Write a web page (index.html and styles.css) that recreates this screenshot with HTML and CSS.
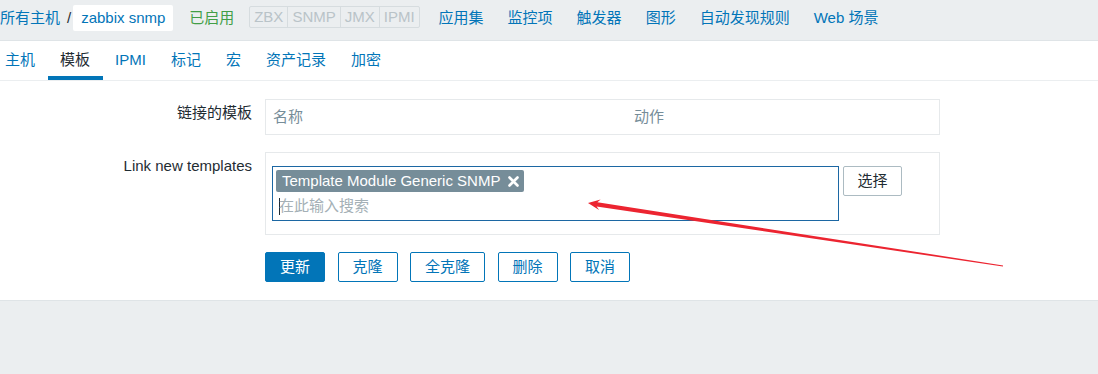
FILE: index.html
```html
<!DOCTYPE html>
<html lang="zh-CN">
<head>
  <meta charset="UTF-8" />
  <title>模板 - zabbix snmp</title>
  <link rel="stylesheet" href="styles.css">
</head>
<body>
  <div class="page">
    <div class="host-nav">
      <a class="crumb" href="#">所有主机</a>
      <span class="crumb-sep">/</span>
      <span class="crumb-current">zabbix snmp</span>
      <span class="status-on">已启用</span>
      <div class="avail">
        <span class="avail-item">ZBX</span>
        <span class="avail-item">SNMP</span>
        <span class="avail-item">JMX</span>
        <span class="avail-item">IPMI</span>
      </div>
      <nav class="host-links">
        <a href="#">应用集</a>
        <a href="#">监控项</a>
        <a href="#">触发器</a>
        <a href="#">图形</a>
        <a href="#">自动发现规则</a>
        <a href="#">Web 场景</a>
      </nav>
    </div>

    <ul class="tabs">
      <li class="tab">主机</li>
      <li class="tab active">模板</li>
      <li class="tab">IPMI</li>
      <li class="tab">标记</li>
      <li class="tab">宏</li>
      <li class="tab">资产记录</li>
      <li class="tab">加密</li>
    </ul>

    <div class="form">
      <div class="form-row">
        <label class="form-label">链接的模板</label>
        <div class="form-field">
          <div class="linked-table">
            <span class="col-name">名称</span>
            <span class="col-action">动作</span>
          </div>
        </div>
      </div>

      <div class="form-row">
        <label class="form-label">Link new templates</label>
        <div class="form-field">
          <div class="field-box">
            <div class="multiselect">
              <span class="ms-tag">Template Module Generic SNMP
                <svg class="ms-remove" width="11" height="11" viewBox="0 0 11 11">
                  <path d="M1.5 1.5 L9.5 9.5 M9.5 1.5 L1.5 9.5" stroke="#fff" stroke-width="2.6" stroke-linecap="round"/>
                </svg>
              </span>
              <div class="ms-search"><span class="caret"></span>在此输入搜索</div>
            </div>
            <button class="btn-alt" type="button">选择</button>
          </div>
        </div>
      </div>

      <div class="form-buttons">
        <button class="btn primary" type="button">更新</button>
        <button class="btn" type="button">克隆</button>
        <button class="btn wide" type="button">全克隆</button>
        <button class="btn" type="button">删除</button>
        <button class="btn" type="button">取消</button>
      </div>
    </div>

    <svg class="annotation" width="1098" height="374" viewBox="0 0 1098 374">
      <polygon fill="#ec2430" points="588,203 600.6,199.6 597.4,202.3 1003.1,265.4 1002.9,266.6 596.6,206.5 599.1,210"/>
    </svg>
  </div>
</body>
</html>
```

FILE: styles.css
```css
:root {
  --blue: #0275b8;
  --text: #1f2c33;
  --grey-bg: #ebeef0;
  --border: #dfe4e7;
  --muted: #768d99;
}

body {
  margin: 0;
  background: var(--grey-bg);
  font-family: "Liberation Sans", "Noto Sans CJK SC", sans-serif;
  font-size: 15px;
  line-height: 18px;
  color: var(--text);
}

a {
  color: var(--blue);
  text-decoration: none;
}

.page {
  position: relative;
  height: 374px;
  overflow: hidden;
}

/* host navigation */
.host-nav {
  display: flex;
  align-items: center;
  height: 36px;
  padding-bottom: 4px;
  white-space: nowrap;
}

.crumb-sep {
  margin: 0 2px 0 7px;
  color: var(--text);
}

.crumb-current {
  display: flex;
  align-items: center;
  height: 26px;
  width: 100px;
  box-sizing: border-box;
  padding: 0 8px;
  background: #fff;
  border-radius: 2px;
  color: var(--blue);
}

.status-on {
  margin-left: 16px;
  color: #429e47;
}

.avail {
  display: flex;
  align-self: flex-start;
  margin: 6px 0 0 15px;
  height: 22px;
  box-sizing: border-box;
  border: 1px solid #d6dcdf;
  border-radius: 2px;
}

.avail-item {
  padding: 0 4px;
  line-height: 20px;
  color: #b9c3c8;
  border-right: 1px solid #d6dcdf;
}

.avail-item:last-child {
  border-right: none;
}

.host-links {
  display: flex;
  gap: 24px;
  margin-left: 19px;
}

/* tabs */
.tabs {
  display: flex;
  margin: 0;
  padding: 0 0 0 5px;
  list-style: none;
  background: #fff;
  border-top: 1px solid var(--border);
  border-bottom: 1px solid var(--grey-bg);
  height: 39px;
}

.tab {
  padding: 0 12.5px;
  line-height: 37px;
  color: var(--blue);
  border-bottom: 4px solid transparent;
  height: 35px;
}

.tab:first-child {
  margin-left: -12.5px;
}

.tab.active {
  color: var(--text);
  border-bottom-color: var(--blue);
}

/* form */
.form {
  background: #fff;
  padding: 18px 0 18px;
  border-bottom: 1px solid var(--border);
}

.form-row {
  display: grid;
  grid-template-columns: 252px 675px;
  column-gap: 13px;
  margin-bottom: 17px;
}

.form-label {
  text-align: right;
  padding-top: 5px;
}

.linked-table {
  display: flex;
  align-items: center;
  height: 34px;
  border: 1px solid #e6e9eb;
  color: var(--muted);
}

.col-name {
  width: 361px;
  padding-left: 7px;
}

.field-box {
  display: flex;
  align-items: flex-start;
  border: 1px solid #e6e9eb;
  padding: 13px 6px;
}

.multiselect {
  width: 567px;
  height: 55px;
  box-sizing: border-box;
  border: 1px solid #1c67a3;
  padding: 3px;
}

.ms-tag {
  display: inline-flex;
  align-items: center;
  height: 22px;
  padding: 0 5px 0 6px;
  background: var(--muted);
  border-radius: 2px;
  color: #fff;
  white-space: nowrap;
}

.ms-remove {
  margin-left: 8px;
}

.ms-search {
  display: flex;
  align-items: center;
  height: 24px;
  margin-top: 2px;
  padding-left: 3px;
  color: #a4b0b6;
}

.caret {
  width: 1px;
  height: 17px;
  background: var(--text);
  margin-right: -1px;
}

.btn-alt {
  margin-left: 4px;
  width: 59px;
  height: 30px;
  background: #fff;
  border: 1px solid #acbbc2;
  border-radius: 2px;
  font: inherit;
  color: var(--text);
  padding: 0;
}

.form-buttons {
  display: flex;
  gap: 12.5px;
  margin-left: 265px;
}

.btn {
  width: 60px;
  height: 30px;
  padding: 0;
  background: #fff;
  border: 1px solid var(--blue);
  border-radius: 2px;
  font: inherit;
  color: var(--blue);
}

.btn.wide {
  width: 75px;
}

.btn.primary {
  background: var(--blue);
  color: #fff;
}

/* red annotation arrow over the screenshot */
.annotation {
  position: absolute;
  top: 0;
  left: 0;
  pointer-events: none;
}
```
